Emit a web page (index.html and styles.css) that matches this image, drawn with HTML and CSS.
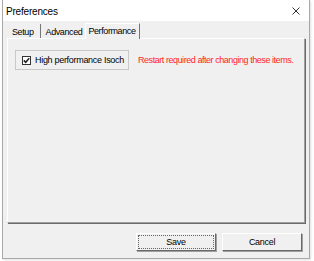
FILE: index.html
```html
<!DOCTYPE html>
<html lang="en">
<head>
  <meta charset="UTF-8">
  <title>Preferences</title>
  <link rel="stylesheet" href="styles.css">
</head>
<body>
  <div class="window">
    <div class="titlebar">
      <span class="title">Preferences</span>
      <svg class="close" width="8" height="8" viewBox="0 0 8 8"><path d="M0.5 0.5 L7.5 7.5 M7.5 0.5 L0.5 7.5" stroke="#333" stroke-width="1"/></svg>
    </div>
    <div class="client">
      <div class="tabs">
        <div class="tab">Setup</div>
        <div class="tab">Advanced</div>
        <div class="tab active">Performance</div>
      </div>
      <div class="panel">
        <div class="panel-row">
          <label class="option">
            <span class="check">
              <svg width="7" height="7" viewBox="0 0 7 7"><path d="M0.8 3.4 L2.7 5.3 L6.2 1.2" fill="none" stroke="#222" stroke-width="1.5"/></svg>
            </span>
            <span>High performance Isoch</span>
          </label>
          <span class="warning">Restart required after changing these items.</span>
        </div>
      </div>
      <div class="buttons">
        <button class="btn default">Save</button>
        <button class="btn">Cancel</button>
      </div>
    </div>
  </div>
</body>
</html>
```

FILE: styles.css
```css
html, body {
  margin: 0;
  width: 100%;
  height: 100%;
  background: #fff;
}
body {
  font-family: "Liberation Sans", Arial, sans-serif;
  font-size: 9px;
  letter-spacing: -0.3px;
  color: #000;
}
.window {
  box-sizing: border-box;
  width: 308px;
  height: 259px;
  margin-left: 2px;
  border: 1px solid #a8a8a8;
  border-top: none;
  display: flex;
  flex-direction: column;
  box-shadow: 1px 1px 2px rgba(0,0,0,0.12);
}
.titlebar {
  height: 21px;
  flex-shrink: 0;
  background: #fff;
  display: flex;
  align-items: center;
  justify-content: space-between;
  padding: 1px 9px 0 3px;
  box-sizing: border-box;
  font-size: 10px;
  letter-spacing: -0.2px;
}
.client {
  flex: 1;
  background: #f0f0f0;
  padding: 1px 4px 0 4px;
  display: flex;
  flex-direction: column;
}
.tabs {
  display: flex;
  align-items: flex-end;
  height: 16px;
  letter-spacing: -0.4px;
}
.tab {
  height: 14px;
  line-height: 12px;
  padding: 2px 2px 0 5px;
  box-sizing: border-box;
  white-space: nowrap;
}
.tab:first-child {
  padding: 2px 6px 0 5px;
  border-right: 1px solid #777;
}
.tab.active {
  height: 16px;
  line-height: 12px;
  padding: 1px 3px 0 2px;
  margin-left: 1px;
  margin-bottom: -1px;
  border-right: 1px solid #777;
  border-left: 1px solid #fff;
  border-top: 1px solid #fff;
  background: #f0f0f0;
  position: relative;
  z-index: 1;
}
.panel {
  height: 185px;
  box-sizing: border-box;
  border: 1px solid #fff;
  border-right: 1px solid #a0a0a0;
  border-bottom: 1px solid #a0a0a0;
  box-shadow: 1px 1px 0 #696969;
  padding: 11px 0 0 7px;
  flex-shrink: 0;
}
.panel-row {
  display: flex;
  align-items: center;
  gap: 9px;
}
.option {
  display: flex;
  align-items: center;
  gap: 4px;
  box-sizing: border-box;
  width: 114px;
  height: 20px;
  padding-left: 6px;
  border: 1px solid #c8c8c8;
  white-space: nowrap;
}
.check {
  width: 7px;
  height: 7px;
  border: 1px solid #333;
  background: #fff;
  display: flex;
}
.warning {
  color: #ff1f1f;
  letter-spacing: -0.45px;
  white-space: nowrap;
}
.buttons {
  display: flex;
  justify-content: flex-end;
  gap: 6px;
  padding: 10px 3px 0 0;
}
.btn {
  box-sizing: border-box;
  width: 80px;
  height: 18px;
  font-family: "Liberation Sans", Arial, sans-serif;
  font-size: 9px;
  letter-spacing: -0.3px;
  color: #000;
  background: #f0f0f0;
  border: 1px solid;
  border-color: #fff #696969 #696969 #fff;
  box-shadow: 1px 1px 0 #a0a0a0;
  padding: 0;
}
.btn.default {
  outline: 1px dotted #666;
  outline-offset: -3px;
}
```
